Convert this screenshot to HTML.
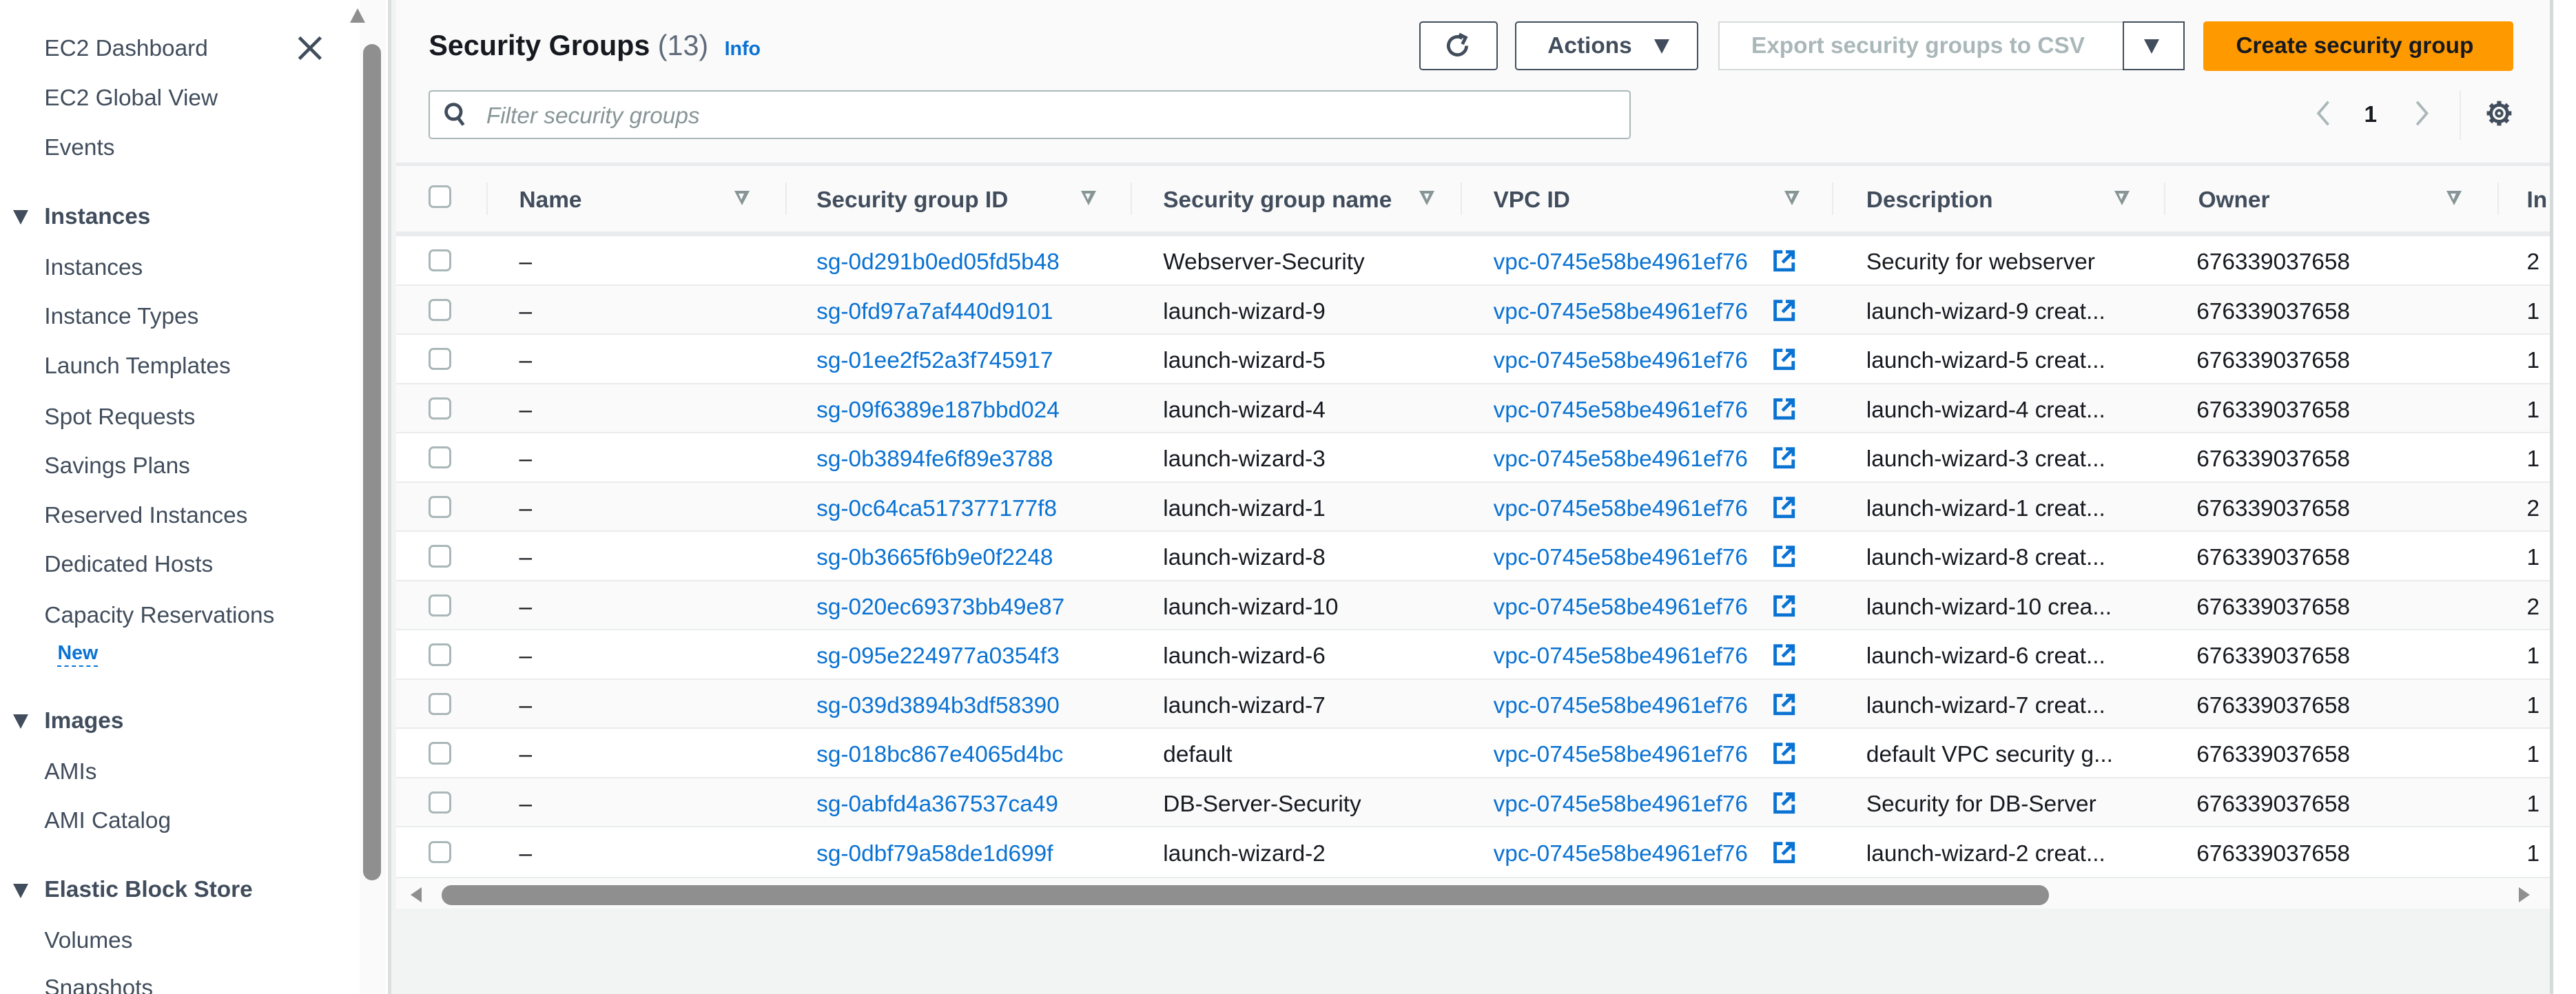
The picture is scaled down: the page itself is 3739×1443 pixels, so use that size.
<!DOCTYPE html>
<html><head><meta charset="utf-8">
<style>
html,body{margin:0;padding:0;}
body{width:3739px;height:1442px;overflow:hidden;background:#fff;}
#z{zoom:2.3846;width:1568px;height:605px;position:relative;overflow:hidden;font-family:"Liberation Sans",sans-serif;font-size:14px;color:#16191f;}
.a{position:absolute;white-space:nowrap;}
.side{color:#414d5c;margin-top:1px;}
.sh{font-weight:bold;color:#414d5c;margin-top:1px;}
.tri{position:absolute;width:0;height:0;border-left:5px solid transparent;border-right:5px solid transparent;border-top:9px solid #414d5c;}
.lnk{color:#0972d3;}
.row{position:absolute;left:241px;width:1311px;height:30px;border-top:1px solid #e9ebed;}
.cb{position:absolute;left:20px;top:8px;width:11px;height:11px;border:1.5px solid #aab7b8;border-radius:3px;background:#fff;}
.c{position:absolute;top:8px;white-space:nowrap;}
.ext{position:absolute;top:8px;left:838px;width:14px;height:14px;}
.hd{position:absolute;top:114px;font-weight:bold;color:#414d5c;white-space:nowrap;}
.fi{position:absolute;top:116px;width:0;height:0;border-left:5px solid transparent;border-right:5px solid transparent;border-top:9px solid #879596;}
.fi:after{content:"";position:absolute;left:-2px;top:-7px;border-left:2px solid transparent;border-right:2px solid transparent;border-top:4px solid #fafafa;}
.sep{position:absolute;top:111px;width:1px;height:20px;background:#e9ebed;}
</style></head><body><div id="z">
<!-- sidebar -->
<div class="a" style="left:0;top:0;width:219px;height:605px;background:#fff"></div>
<div class="a side" style="left:27px;top:21px">EC2 Dashboard</div>
<svg class="a" style="left:181px;top:22px" width="15" height="15" viewBox="0 0 15 15"><path d="M1 1L14 14M14 1L1 14" stroke="#414d5c" stroke-width="2"/></svg>
<div class="a side" style="left:27px;top:51px">EC2 Global View</div>
<div class="a side" style="left:27px;top:81px">Events</div>
<div class="tri" style="left:8px;top:128px"></div><div class="a sh" style="left:27px;top:123px">Instances</div>
<div class="a side" style="left:27px;top:154px">Instances</div>
<div class="a side" style="left:27px;top:184px">Instance Types</div>
<div class="a side" style="left:27px;top:214px">Launch Templates</div>
<div class="a side" style="left:27px;top:245px">Spot Requests</div>
<div class="a side" style="left:27px;top:275px">Savings Plans</div>
<div class="a side" style="left:27px;top:305px">Reserved Instances</div>
<div class="a side" style="left:27px;top:335px">Dedicated Hosts</div>
<div class="a side" style="left:27px;top:366px">Capacity Reservations</div>
<div class="a" style="left:35px;top:391px;font-size:12px;font-weight:bold;color:#0972d3;border-bottom:1px dashed #0972d3;line-height:14px">New</div>
<div class="tri" style="left:8px;top:435px"></div><div class="a sh" style="left:27px;top:430px">Images</div>
<div class="a side" style="left:27px;top:461px">AMIs</div>
<div class="a side" style="left:27px;top:491px">AMI Catalog</div>
<div class="tri" style="left:8px;top:538px"></div><div class="a sh" style="left:27px;top:533px">Elastic Block Store</div>
<div class="a side" style="left:27px;top:564px">Volumes</div>
<div class="a side" style="left:27px;top:593px">Snapshots</div>
<!-- vertical scrollbar -->
<div class="a" style="left:219px;top:0;width:16px;height:605px;background:#fafafa"></div>
<div class="a" style="top:5px;width:0;height:0;border-left:5px solid transparent;border-right:5px solid transparent;border-bottom:9px solid #8f8f8f;left:213px"></div>
<div class="a" style="left:221px;top:27px;width:11px;height:509px;background:#8f8f8f;border-radius:6px"></div>
<div class="a" style="left:236px;top:0;width:2px;height:605px;background:#dcdfe0"></div>
<!-- main -->
<div class="a" style="left:238px;top:0;width:1315px;height:605px;background:#f2f3f3"></div>
<div class="a" style="left:241px;top:0;width:1311px;height:553px;background:#fafafa"></div>
<div class="a" style="left:1552px;top:0;width:2px;height:605px;background:#d5dbdb"></div>
<div class="a" style="left:1554px;top:0;width:14px;height:605px;background:#fff"></div>
<div class="a" style="left:261px;top:18px;font-size:17.3px;font-weight:bold;color:#16191f">Security Groups <span style="font-weight:normal;color:#5f6b7a">(13)</span></div>
<div class="a" style="left:441px;top:23px;font-size:12px;font-weight:bold;color:#0972d3">Info</div>
<!-- buttons -->
<div class="a" style="left:864px;top:13px;width:46px;height:28px;border:1px solid #414d5c;border-radius:2px;background:#fff"></div>
<svg class="a" style="left:878px;top:19px" width="18" height="18" viewBox="0 0 18 18"><path d="M14.5 9A5.5 5.5 0 1 1 12 4.4" fill="none" stroke="#414d5c" stroke-width="2"/><path d="M10 2L14 4L12 8" fill="none" stroke="#414d5c" stroke-width="2"/></svg>
<div class="a" style="left:922px;top:13px;width:110px;height:28px;border:1px solid #414d5c;border-radius:2px;background:#fff"></div>
<div class="a" style="left:942px;top:20px;font-weight:bold;color:#414d5c">Actions</div>
<div class="tri" style="left:1007px;top:24px"></div>
<div class="a" style="left:1046px;top:13px;width:246px;height:28px;border:1px solid #d5dbdb;border-right:none;background:#fff"></div>
<div class="a" style="left:1066px;top:20px;font-weight:bold;color:#aab7b8">Export security groups to CSV</div>
<div class="a" style="left:1292px;top:13px;width:36px;height:28px;border:1px solid #414d5c;background:#fff"></div>
<div class="tri" style="left:1305px;top:24px"></div>
<div class="a" style="left:1341px;top:13px;width:189px;height:30px;background:#ff9900;border-radius:2px"></div>
<div class="a" style="left:1361px;top:20px;font-weight:bold;color:#16191f">Create security group</div>
<!-- filter -->
<div class="a" style="left:261px;top:55px;width:730px;height:28px;border:1px solid #aab7b8;border-radius:2px;background:#fff"></div>
<svg class="a" style="left:270px;top:62px" width="14" height="16" viewBox="0 0 14 16"><circle cx="6" cy="6" r="4.5" fill="none" stroke="#414d5c" stroke-width="2"/><path d="M9 10L12 14" stroke="#414d5c" stroke-width="2"/></svg>
<div class="a" style="left:296px;top:63px;font-style:italic;color:#879596">Filter security groups</div>
<!-- pagination -->
<svg class="a" style="left:1408px;top:60px" width="12" height="18" viewBox="0 0 12 18"><path d="M9 2L3 9L9 16" fill="none" stroke="#aab7b8" stroke-width="1.6"/></svg>
<div class="a" style="left:1439px;top:62px;font-weight:bold">1</div>
<svg class="a" style="left:1468px;top:60px" width="12" height="18" viewBox="0 0 12 18"><path d="M3 2L9 9L3 16" fill="none" stroke="#aab7b8" stroke-width="1.6"/></svg>
<div class="a" style="left:1497px;top:55px;width:1px;height:30px;background:#e9ebed"></div>
<svg class="a" style="left:1512px;top:60px" width="18" height="18" viewBox="0 0 18 18"><g stroke="#414d5c" stroke-width="2.6" stroke-linecap="butt"><path d="M9 1.5V4.5M9 13.5V16.5M1.5 9H4.5M13.5 9H16.5M3.7 3.7L5.8 5.8M12.2 12.2L14.3 14.3M3.7 14.3L5.8 12.2M12.2 5.8L14.3 3.7"/></g><circle cx="9" cy="9" r="5" fill="#fafafa" stroke="#414d5c" stroke-width="2"/><circle cx="9" cy="9" r="1.8" fill="none" stroke="#414d5c" stroke-width="1.6"/></svg>
<!-- header -->
<div class="a" style="left:241px;top:99px;width:1311px;height:2px;background:#e9ebed"></div>
<div class="a" style="left:261px;top:113px;width:11px;height:11px;border:1.5px solid #aab7b8;border-radius:3px;background:#fff"></div>
<div class="sep" style="left:296px"></div><div class="hd" style="left:316px">Name</div><div class="fi" style="left:447px"></div>
<div class="sep" style="left:478px"></div><div class="hd" style="left:497px">Security group ID</div><div class="fi" style="left:658px"></div>
<div class="sep" style="left:688px"></div><div class="hd" style="left:708px">Security group name</div><div class="fi" style="left:864px"></div>
<div class="sep" style="left:889px"></div><div class="hd" style="left:909px">VPC ID</div><div class="fi" style="left:1086px"></div>
<div class="sep" style="left:1115px"></div><div class="hd" style="left:1136px">Description</div><div class="fi" style="left:1287px"></div>
<div class="sep" style="left:1317px"></div><div class="hd" style="left:1338px">Owner</div><div class="fi" style="left:1489px"></div>
<div class="sep" style="left:1520px"></div><div class="hd" style="left:1538px">In</div>
<div class="a" style="left:241px;top:141px;width:1311px;height:2px;background:#e9ebed"></div>
<!-- rows -->
<div class="row" style="top:143px;background:#fff"><div class="cb"></div><div class="c" style="left:75px">–</div><div class="c lnk" style="left:256px">sg-0d291b0ed05fd5b48</div><div class="c" style="left:467px">Webserver-Security</div><div class="c lnk" style="left:668px">vpc-0745e58be4961ef76</div><svg class="ext" viewBox="0 0 14 14"><path d="M6 1.5H1.5V12.5H12.5V8M8 1.5H12.5V6M12.5 1.5L6 8" fill="none" stroke="#0972d3" stroke-width="2"/></svg><div class="c" style="left:895px">Security for webserver</div><div class="c" style="left:1096px">676339037658</div><div class="c" style="left:1297px">2</div></div>
<div class="row" style="top:173px;background:#fafafa"><div class="cb"></div><div class="c" style="left:75px">–</div><div class="c lnk" style="left:256px">sg-0fd97a7af440d9101</div><div class="c" style="left:467px">launch-wizard-9</div><div class="c lnk" style="left:668px">vpc-0745e58be4961ef76</div><svg class="ext" viewBox="0 0 14 14"><path d="M6 1.5H1.5V12.5H12.5V8M8 1.5H12.5V6M12.5 1.5L6 8" fill="none" stroke="#0972d3" stroke-width="2"/></svg><div class="c" style="left:895px">launch-wizard-9 creat...</div><div class="c" style="left:1096px">676339037658</div><div class="c" style="left:1297px">1</div></div>
<div class="row" style="top:203px;background:#fff"><div class="cb"></div><div class="c" style="left:75px">–</div><div class="c lnk" style="left:256px">sg-01ee2f52a3f745917</div><div class="c" style="left:467px">launch-wizard-5</div><div class="c lnk" style="left:668px">vpc-0745e58be4961ef76</div><svg class="ext" viewBox="0 0 14 14"><path d="M6 1.5H1.5V12.5H12.5V8M8 1.5H12.5V6M12.5 1.5L6 8" fill="none" stroke="#0972d3" stroke-width="2"/></svg><div class="c" style="left:895px">launch-wizard-5 creat...</div><div class="c" style="left:1096px">676339037658</div><div class="c" style="left:1297px">1</div></div>
<div class="row" style="top:233px;background:#fafafa"><div class="cb"></div><div class="c" style="left:75px">–</div><div class="c lnk" style="left:256px">sg-09f6389e187bbd024</div><div class="c" style="left:467px">launch-wizard-4</div><div class="c lnk" style="left:668px">vpc-0745e58be4961ef76</div><svg class="ext" viewBox="0 0 14 14"><path d="M6 1.5H1.5V12.5H12.5V8M8 1.5H12.5V6M12.5 1.5L6 8" fill="none" stroke="#0972d3" stroke-width="2"/></svg><div class="c" style="left:895px">launch-wizard-4 creat...</div><div class="c" style="left:1096px">676339037658</div><div class="c" style="left:1297px">1</div></div>
<div class="row" style="top:263px;background:#fff"><div class="cb"></div><div class="c" style="left:75px">–</div><div class="c lnk" style="left:256px">sg-0b3894fe6f89e3788</div><div class="c" style="left:467px">launch-wizard-3</div><div class="c lnk" style="left:668px">vpc-0745e58be4961ef76</div><svg class="ext" viewBox="0 0 14 14"><path d="M6 1.5H1.5V12.5H12.5V8M8 1.5H12.5V6M12.5 1.5L6 8" fill="none" stroke="#0972d3" stroke-width="2"/></svg><div class="c" style="left:895px">launch-wizard-3 creat...</div><div class="c" style="left:1096px">676339037658</div><div class="c" style="left:1297px">1</div></div>
<div class="row" style="top:293px;background:#fafafa"><div class="cb"></div><div class="c" style="left:75px">–</div><div class="c lnk" style="left:256px">sg-0c64ca517377177f8</div><div class="c" style="left:467px">launch-wizard-1</div><div class="c lnk" style="left:668px">vpc-0745e58be4961ef76</div><svg class="ext" viewBox="0 0 14 14"><path d="M6 1.5H1.5V12.5H12.5V8M8 1.5H12.5V6M12.5 1.5L6 8" fill="none" stroke="#0972d3" stroke-width="2"/></svg><div class="c" style="left:895px">launch-wizard-1 creat...</div><div class="c" style="left:1096px">676339037658</div><div class="c" style="left:1297px">2</div></div>
<div class="row" style="top:323px;background:#fff"><div class="cb"></div><div class="c" style="left:75px">–</div><div class="c lnk" style="left:256px">sg-0b3665f6b9e0f2248</div><div class="c" style="left:467px">launch-wizard-8</div><div class="c lnk" style="left:668px">vpc-0745e58be4961ef76</div><svg class="ext" viewBox="0 0 14 14"><path d="M6 1.5H1.5V12.5H12.5V8M8 1.5H12.5V6M12.5 1.5L6 8" fill="none" stroke="#0972d3" stroke-width="2"/></svg><div class="c" style="left:895px">launch-wizard-8 creat...</div><div class="c" style="left:1096px">676339037658</div><div class="c" style="left:1297px">1</div></div>
<div class="row" style="top:353px;background:#fafafa"><div class="cb"></div><div class="c" style="left:75px">–</div><div class="c lnk" style="left:256px">sg-020ec69373bb49e87</div><div class="c" style="left:467px">launch-wizard-10</div><div class="c lnk" style="left:668px">vpc-0745e58be4961ef76</div><svg class="ext" viewBox="0 0 14 14"><path d="M6 1.5H1.5V12.5H12.5V8M8 1.5H12.5V6M12.5 1.5L6 8" fill="none" stroke="#0972d3" stroke-width="2"/></svg><div class="c" style="left:895px">launch-wizard-10 crea...</div><div class="c" style="left:1096px">676339037658</div><div class="c" style="left:1297px">2</div></div>
<div class="row" style="top:383px;background:#fff"><div class="cb"></div><div class="c" style="left:75px">–</div><div class="c lnk" style="left:256px">sg-095e224977a0354f3</div><div class="c" style="left:467px">launch-wizard-6</div><div class="c lnk" style="left:668px">vpc-0745e58be4961ef76</div><svg class="ext" viewBox="0 0 14 14"><path d="M6 1.5H1.5V12.5H12.5V8M8 1.5H12.5V6M12.5 1.5L6 8" fill="none" stroke="#0972d3" stroke-width="2"/></svg><div class="c" style="left:895px">launch-wizard-6 creat...</div><div class="c" style="left:1096px">676339037658</div><div class="c" style="left:1297px">1</div></div>
<div class="row" style="top:413px;background:#fafafa"><div class="cb"></div><div class="c" style="left:75px">–</div><div class="c lnk" style="left:256px">sg-039d3894b3df58390</div><div class="c" style="left:467px">launch-wizard-7</div><div class="c lnk" style="left:668px">vpc-0745e58be4961ef76</div><svg class="ext" viewBox="0 0 14 14"><path d="M6 1.5H1.5V12.5H12.5V8M8 1.5H12.5V6M12.5 1.5L6 8" fill="none" stroke="#0972d3" stroke-width="2"/></svg><div class="c" style="left:895px">launch-wizard-7 creat...</div><div class="c" style="left:1096px">676339037658</div><div class="c" style="left:1297px">1</div></div>
<div class="row" style="top:443px;background:#fff"><div class="cb"></div><div class="c" style="left:75px">–</div><div class="c lnk" style="left:256px">sg-018bc867e4065d4bc</div><div class="c" style="left:467px">default</div><div class="c lnk" style="left:668px">vpc-0745e58be4961ef76</div><svg class="ext" viewBox="0 0 14 14"><path d="M6 1.5H1.5V12.5H12.5V8M8 1.5H12.5V6M12.5 1.5L6 8" fill="none" stroke="#0972d3" stroke-width="2"/></svg><div class="c" style="left:895px">default VPC security g...</div><div class="c" style="left:1096px">676339037658</div><div class="c" style="left:1297px">1</div></div>
<div class="row" style="top:473px;background:#fafafa"><div class="cb"></div><div class="c" style="left:75px">–</div><div class="c lnk" style="left:256px">sg-0abfd4a367537ca49</div><div class="c" style="left:467px">DB-Server-Security</div><div class="c lnk" style="left:668px">vpc-0745e58be4961ef76</div><svg class="ext" viewBox="0 0 14 14"><path d="M6 1.5H1.5V12.5H12.5V8M8 1.5H12.5V6M12.5 1.5L6 8" fill="none" stroke="#0972d3" stroke-width="2"/></svg><div class="c" style="left:895px">Security for DB-Server</div><div class="c" style="left:1096px">676339037658</div><div class="c" style="left:1297px">1</div></div>
<div class="row" style="top:503px;background:#fff;border-bottom:1px solid #e9ebed"><div class="cb"></div><div class="c" style="left:75px">–</div><div class="c lnk" style="left:256px">sg-0dbf79a58de1d699f</div><div class="c" style="left:467px">launch-wizard-2</div><div class="c lnk" style="left:668px">vpc-0745e58be4961ef76</div><svg class="ext" viewBox="0 0 14 14"><path d="M6 1.5H1.5V12.5H12.5V8M8 1.5H12.5V6M12.5 1.5L6 8" fill="none" stroke="#0972d3" stroke-width="2"/></svg><div class="c" style="left:895px">launch-wizard-2 creat...</div><div class="c" style="left:1096px">676339037658</div><div class="c" style="left:1297px">1</div></div>
<!-- horizontal scrollbar -->
<div class="a" style="left:250px;top:540px;width:0;height:0;border-top:5px solid transparent;border-bottom:5px solid transparent;border-right:7px solid #8f8f8f"></div>
<div class="a" style="left:269px;top:539px;width:978px;height:12px;background:#8f8f8f;border-radius:6px"></div>
<div class="a" style="left:1533px;top:540px;width:0;height:0;border-top:5px solid transparent;border-bottom:5px solid transparent;border-left:7px solid #8f8f8f"></div>
</div></body></html>
